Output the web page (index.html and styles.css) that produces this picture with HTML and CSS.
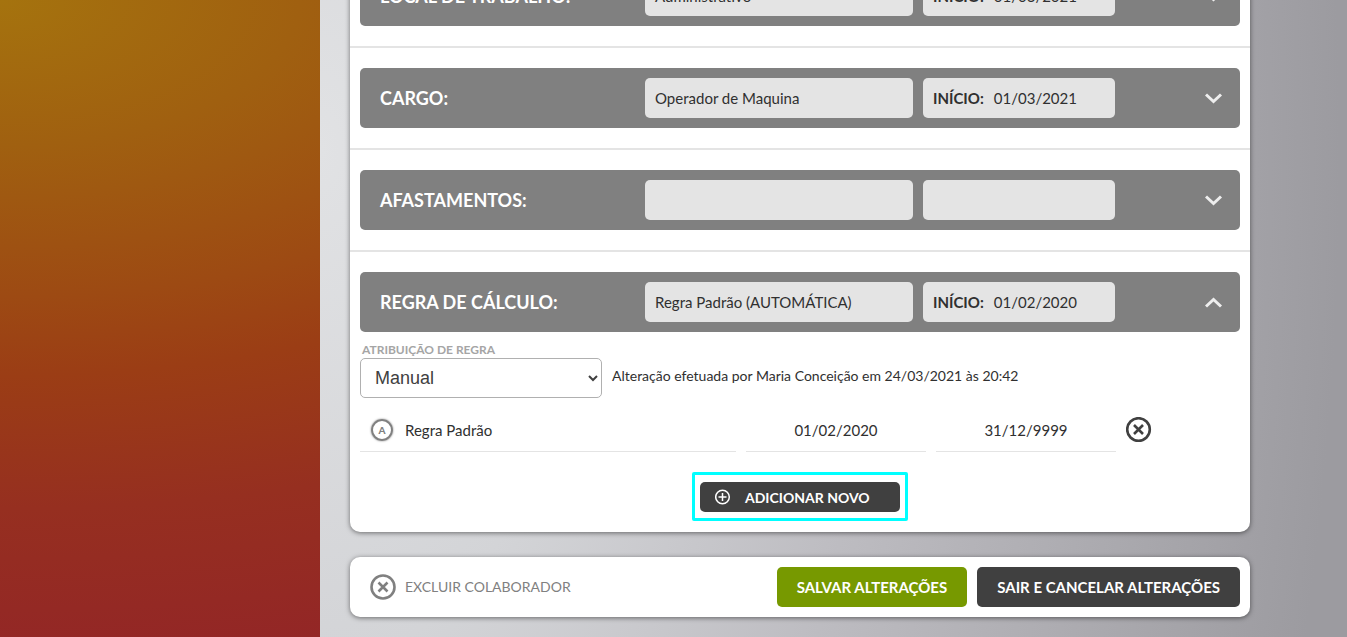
FILE: index.html
```html
<!doctype html>
<html lang="pt-br">
<head>
    <meta charset="UTF-8">
    <meta name="viewport" content="width=device-width, initial-scale=1.0">
    <title>Colaborador</title>
    <link rel="stylesheet" href="styles.css">
</head>
<body>
    <aside class="sidebar"></aside>
    <main class="content">
        <div class="panel">
            <section class="section">
                <div class="bar">
                    <h2>Local de trabalho:</h2>
                    <span class="bar__field">Administrativo</span>
                    <span class="bar__field"><strong>INÍCIO:</strong>01/03/2021</span>
                    <button class="bar__toggle" aria-label="Abrir local de trabalho">
                        <svg width="18" height="12" viewBox="0 0 18 12"><path d="M1 2.5l7.5 7 7.5-7"/></svg>
                    </button>
                </div>
            </section>
            <section class="section">
                <div class="bar">
                    <h2>Cargo:</h2>
                    <span class="bar__field">Operador de Maquina</span>
                    <span class="bar__field"><strong>INÍCIO:</strong>01/03/2021</span>
                    <button class="bar__toggle" aria-label="Abrir cargo">
                        <svg width="18" height="12" viewBox="0 0 18 12"><path d="M1 2.5l7.5 7 7.5-7"/></svg>
                    </button>
                </div>
            </section>
            <section class="section">
                <div class="bar">
                    <h2>Afastamentos:</h2>
                    <span class="bar__field"></span>
                    <span class="bar__field"></span>
                    <button class="bar__toggle" aria-label="Abrir afastamentos">
                        <svg width="18" height="12" viewBox="0 0 18 12"><path d="M1 2.5l7.5 7 7.5-7"/></svg>
                    </button>
                </div>
            </section>
            <section class="section">
                <div class="bar">
                    <h2>Regra de cálculo:</h2>
                    <span class="bar__field">Regra Padrão (AUTOMÁTICA)</span>
                    <span class="bar__field"><strong>INÍCIO:</strong>01/02/2020</span>
                    <button class="bar__toggle" aria-label="Fechar regra de cálculo">
                        <svg width="18" height="12" viewBox="0 0 18 12"><path d="M1 10.5l7.5-7 7.5 7"/></svg>
                    </button>
                </div>
                <div class="rule">
                    <div class="rule__select">
                        <label for="rule">Atribuição de regra</label>
                        <select id="rule">
                            <option>Manual</option>
                            <option>Automática</option>
                        </select>
                    </div>
                    <p>Alteração efetuada por Maria Conceição em 24/03/2021 às 20:42</p>
                </div>
                <ul class="list">
                    <li>
                        <span class="list__name"><span class="badge">A</span>Regra Padrão</span>
                        <span class="list__date">01/02/2020</span>
                        <span class="list__date">31/12/9999</span>
                        <button class="list__remove" aria-label="Remover regra">
                            <svg class="icon" width="26" height="26" viewBox="0 0 26 26">
                                <circle cx="12.5" cy="12.5" r="11.3"/>
                                <path d="M8 8l9 9M17 8l-9 9"/>
                            </svg>
                        </button>
                    </li>
                </ul>
                <div class="add">
                    <button class="add__button">
                        <svg width="16" height="16" viewBox="0 0 16 16">
                            <circle cx="7.5" cy="8" r="6.8" stroke-width="1.5"/>
                            <path d="M7.5 4v8M3.5 8h8" stroke-width="1.5"/>
                        </svg>
                        Adicionar novo
                    </button>
                </div>
            </section>
        </div>
        <div class="actions">
            <button class="actions__delete">
                <svg class="icon" width="26" height="26" viewBox="0 0 26 26">
                    <circle cx="13" cy="13" r="11.5"/>
                    <path d="M8.5 8.5l9 9M17.5 8.5l-9 9"/>
                </svg>
                Excluir colaborador
            </button>
            <button class="btn btn--save">Salvar alterações</button>
            <button class="btn">Sair e cancelar alterações</button>
        </div>
    </main>
</body>
</html>
```

FILE: styles.css
```css
*, ::before, ::after {
    padding: 0;
    margin: 0;
    box-sizing: border-box;
}
body {
    height: 100vh;
    display: flex;
    overflow: hidden;
    font-family: 'Lato', sans-serif;
    font-size: 15px;
    line-height: 20px;
    color: #303030;
}
button {
    border: none;
    background: none;
    font-family: inherit;
    cursor: pointer;
}
svg {
    display: block;
    fill: none;
    stroke: currentColor;
}
.sidebar {
    width: 320px;
    flex-shrink: 0;
    background: radial-gradient(ellipse 1360px 660px at 0 0, #a5730e, #a06010 22%, #9d4a13 45%, #9b3d15 57%, #962f20 77%, #932626);
}
.content {
    flex: 1;
    display: flex;
    flex-direction: column;
    justify-content: flex-end;
    gap: 25px;
    padding: 0 30px 20px;
    background: radial-gradient(ellipse 1020px 1900px at 0 150px, #e1e2e4, #d3d4d7 27%, #bdbcc1 55%, #9c9ba0);
}
.panel, .actions {
    width: 100%;
    max-width: 900px;
    flex-shrink: 0;
    background: #ffffff;
    border-radius: 10px;
    box-shadow: 0 1px 5px rgba(0, 0, 0, .5);
}
.section {
    padding: 20px 10px;
}
.section + .section {
    border-top: 2px solid #e4e4e4;
}
.bar {
    display: grid;
    grid-template-columns: 1fr 268px 192px 115px;
    gap: 10px;
    align-items: center;
    height: 60px;
    padding-left: 20px;
    background: #808080;
    border-radius: 5px;
}
.bar h2 {
    font-size: 18px;
    color: #ffffff;
    text-transform: uppercase;
}
.bar__field {
    height: 40px;
    padding: 10px;
    background: #e4e4e4;
    border-radius: 5px;
}
.bar__field strong {
    margin-right: 10px;
}
.bar__toggle {
    justify-self: end;
    padding: 10px 17px;
    color: #eeeeee;
    stroke-width: 3;
}
.rule {
    display: flex;
    align-items: flex-end;
    gap: 10px;
    padding-top: 10px;
}
.rule__select {
    width: 242px;
}
.rule label {
    display: block;
    padding-left: 2px;
    font-size: 12px;
    line-height: 16px;
    font-weight: bold;
    color: #a5a5a5;
    text-transform: uppercase;
}
.rule select {
    display: block;
    width: 100%;
    height: 40px;
    padding: 0 10px;
    border: 1px solid #b0b0b0;
    border-radius: 5px;
    background: #ffffff;
    font-family: 'Liberation Sans', sans-serif;
    font-size: 18px;
    color: #404040;
}
.rule p {
    font-size: 14px;
    padding-bottom: 12px;
}
.list {
    padding-top: 12px;
    list-style: none;
}
.list li {
    display: grid;
    grid-template-columns: 376px 180px 180px auto;
    gap: 10px;
    justify-content: start;
    height: 42px;
}
.list__name, .list__date {
    display: flex;
    align-items: center;
    padding-bottom: 2px;
    border-bottom: 1px solid #e4e4e4;
}
.list__name {
    gap: 12px;
    padding-left: 11px;
}
.list__date {
    justify-content: center;
}
.badge {
    width: 22px;
    height: 22px;
    border: 2px solid #808080;
    border-radius: 50%;
    box-shadow: 0 0 2px rgba(0, 0, 0, .5);
    font-size: 10px;
    line-height: 18px;
    font-weight: 900;
    text-align: center;
    color: #808080;
}
.list__remove {
    color: #404040;
    height: 40px;
}
.icon {
    stroke-width: 2.6;
}
.add {
    position: relative;
    width: 200px;
    margin: 30px auto 0;
}
/* highlight round the button */
.add::after {
    content: '';
    position: absolute;
    inset: -10px -8px -9px;
    border: 3px solid #00ffff;
    border-radius: 2px;
    pointer-events: none;
}
.add__button {
    display: flex;
    align-items: center;
    gap: 14px;
    width: 100%;
    height: 30px;
    padding-left: 15px;
    background: #404040;
    border-radius: 5px;
    font-size: 14px;
    font-weight: bold;
    color: #ffffff;
    text-transform: uppercase;
}
.actions {
    display: flex;
    align-items: center;
    gap: 10px;
    padding: 10px;
}
.actions__delete {
    display: flex;
    align-items: center;
    gap: 9px;
    margin-right: auto;
    padding-left: 10px;
    font-size: 14px;
    line-height: 20px;
    color: #808080;
    text-transform: uppercase;
}
.btn {
    height: 40px;
    padding: 0 20px;
    background: #404040;
    border-radius: 5px;
    font-size: 15px;
    font-weight: bold;
    color: #ffffff;
    text-transform: uppercase;
}
.btn--save {
    background: #779900;
}
```
